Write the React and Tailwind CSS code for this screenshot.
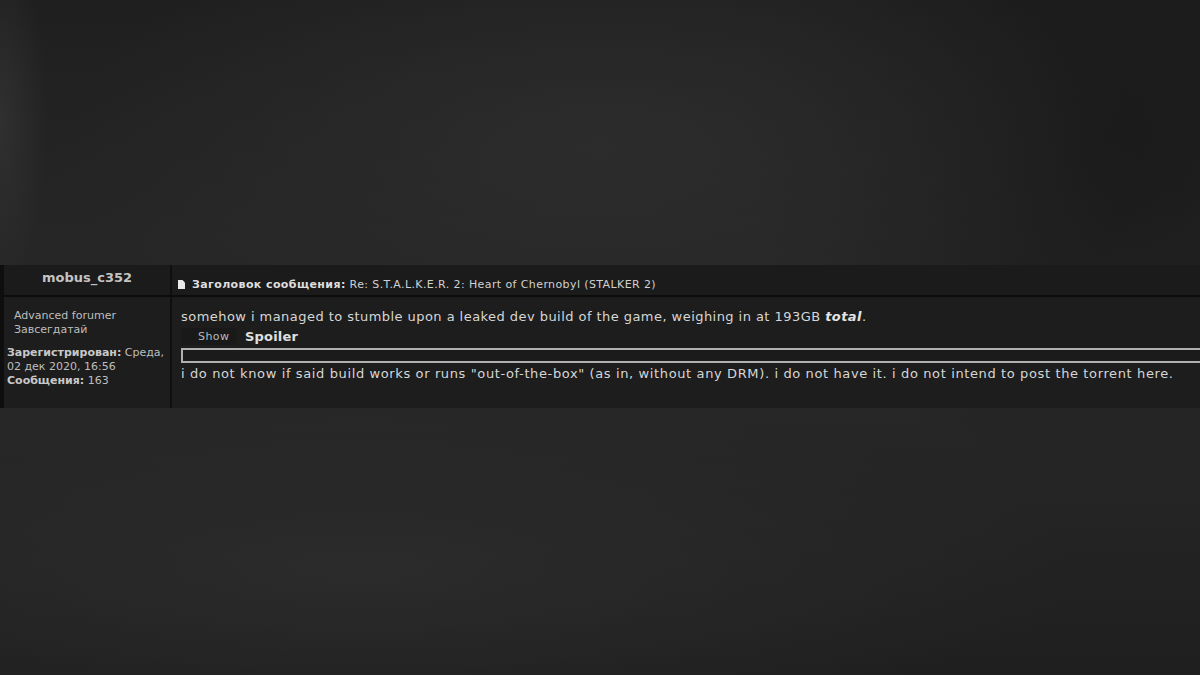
import React from "react";

const font = { fontFamily: '"DejaVu Sans", Verdana, sans-serif' };

export default function App() {
  return (
    <div
      className="w-[1200px] h-[675px] flex flex-col overflow-hidden bg-[#232323] bg-[radial-gradient(ellipse_45%_35%_at_50%_22%,#2c2c2c,transparent),radial-gradient(ellipse_30%_50%_at_92%_20%,#1a1a1a,transparent),radial-gradient(ellipse_4%_25%_at_0%_18%,#303030,transparent),radial-gradient(ellipse_60%_25%_at_30%_84%,#2b2b2b,transparent),linear-gradient(180deg,#1f1f1f_0%,#262626_35%,#272727_60%,#1f1f1f_100%)]"
      style={font}
    >
      {/* top spacer (blurred page header) */}
      <div className="h-[265px] shrink-0" />

      {/* POST TABLE */}
      <div className="flex flex-col bg-[#1d1d1d] border-l-[4px] border-[#0e0e0e]">
        {/* HEADER ROW */}
        <div className="flex h-[32px] border-b-[2px] border-[#0c0c0c] bg-[#1b1b1b]">
          <div className="w-[168px] shrink-0 border-r-[2px] border-[#0f0f0f] flex justify-center pt-[3px]">
            <span className="text-[13px] font-bold text-[#c4c4c4]">mobus_c352</span>
          </div>
          <div className="flex items-end pb-[2px] pl-[6px] gap-[7px]">
            <svg width="7" height="9" viewBox="0 0 7 9" className="mb-[4px]">
              <path d="M0 0H4.5L7 2.5V9H0Z" fill="#e8e8e8" />
            </svg>
            <span className="text-[11px] tracking-[0.4px] text-[#d0d0d0]">
              <b className="text-[#dedede]">Заголовок сообщения:</b> Re: S.T.A.L.K.E.R. 2: Heart of Chernobyl (STALKER 2)
            </span>
          </div>
        </div>

        {/* BODY ROW */}
        <div className="flex h-[111px]">
          <div className="w-[168px] shrink-0 border-r-[2px] border-[#0f0f0f] flex flex-col pt-[12px] text-[11px] leading-[14px] text-[#bdbdbd]">
            <span className="pl-[10px]">Advanced forumer</span>
            <span className="pl-[10px]">Завсегдатай</span>
            <div className="pl-[3px] mt-[9px]">
              <b className="text-[#c8c8c8]">Зарегистрирован:</b> Среда,
              <br />
              02 дек 2020, 16:56
              <br />
              <b className="text-[#c8c8c8]">Сообщения:</b> 163
            </div>
          </div>

          <div className="flex-1 flex flex-col pl-[9px] pt-[12px] text-[13px] leading-[16px] text-[#d6d6d6]">
            <p className="tracking-[0.45px]">
              somehow i managed to stumble upon a leaked dev build of the game, weighing in at 193GB{" "}
              <b className="italic text-[#e4e4e4]">total</b>.
            </p>
            <div className="flex items-center mt-[3px]">
              <span className="w-[56px] h-[17px] bg-[#191919] flex items-center pl-[17px] text-[11px] tracking-[0.4px] text-[#b8b8b8]">
                Show
              </span>
              <span className="ml-[8px] font-bold tracking-[0.2px] text-[#e0e0e0]">Spoiler</span>
            </div>
            <div className="h-[15px] mt-[3px] border-[2px] border-r-0 border-[#b0b0b0] bg-[#1b1b1b]" />
            <p className="mt-[3px] tracking-[0.62px]">
              i do not know if said build works or runs "out-of-the-box" (as in, without any DRM). i do not have it. i do not intend to post the torrent here.
            </p>
          </div>
        </div>
      </div>

      <div className="flex-1" />
    </div>
  );
}
